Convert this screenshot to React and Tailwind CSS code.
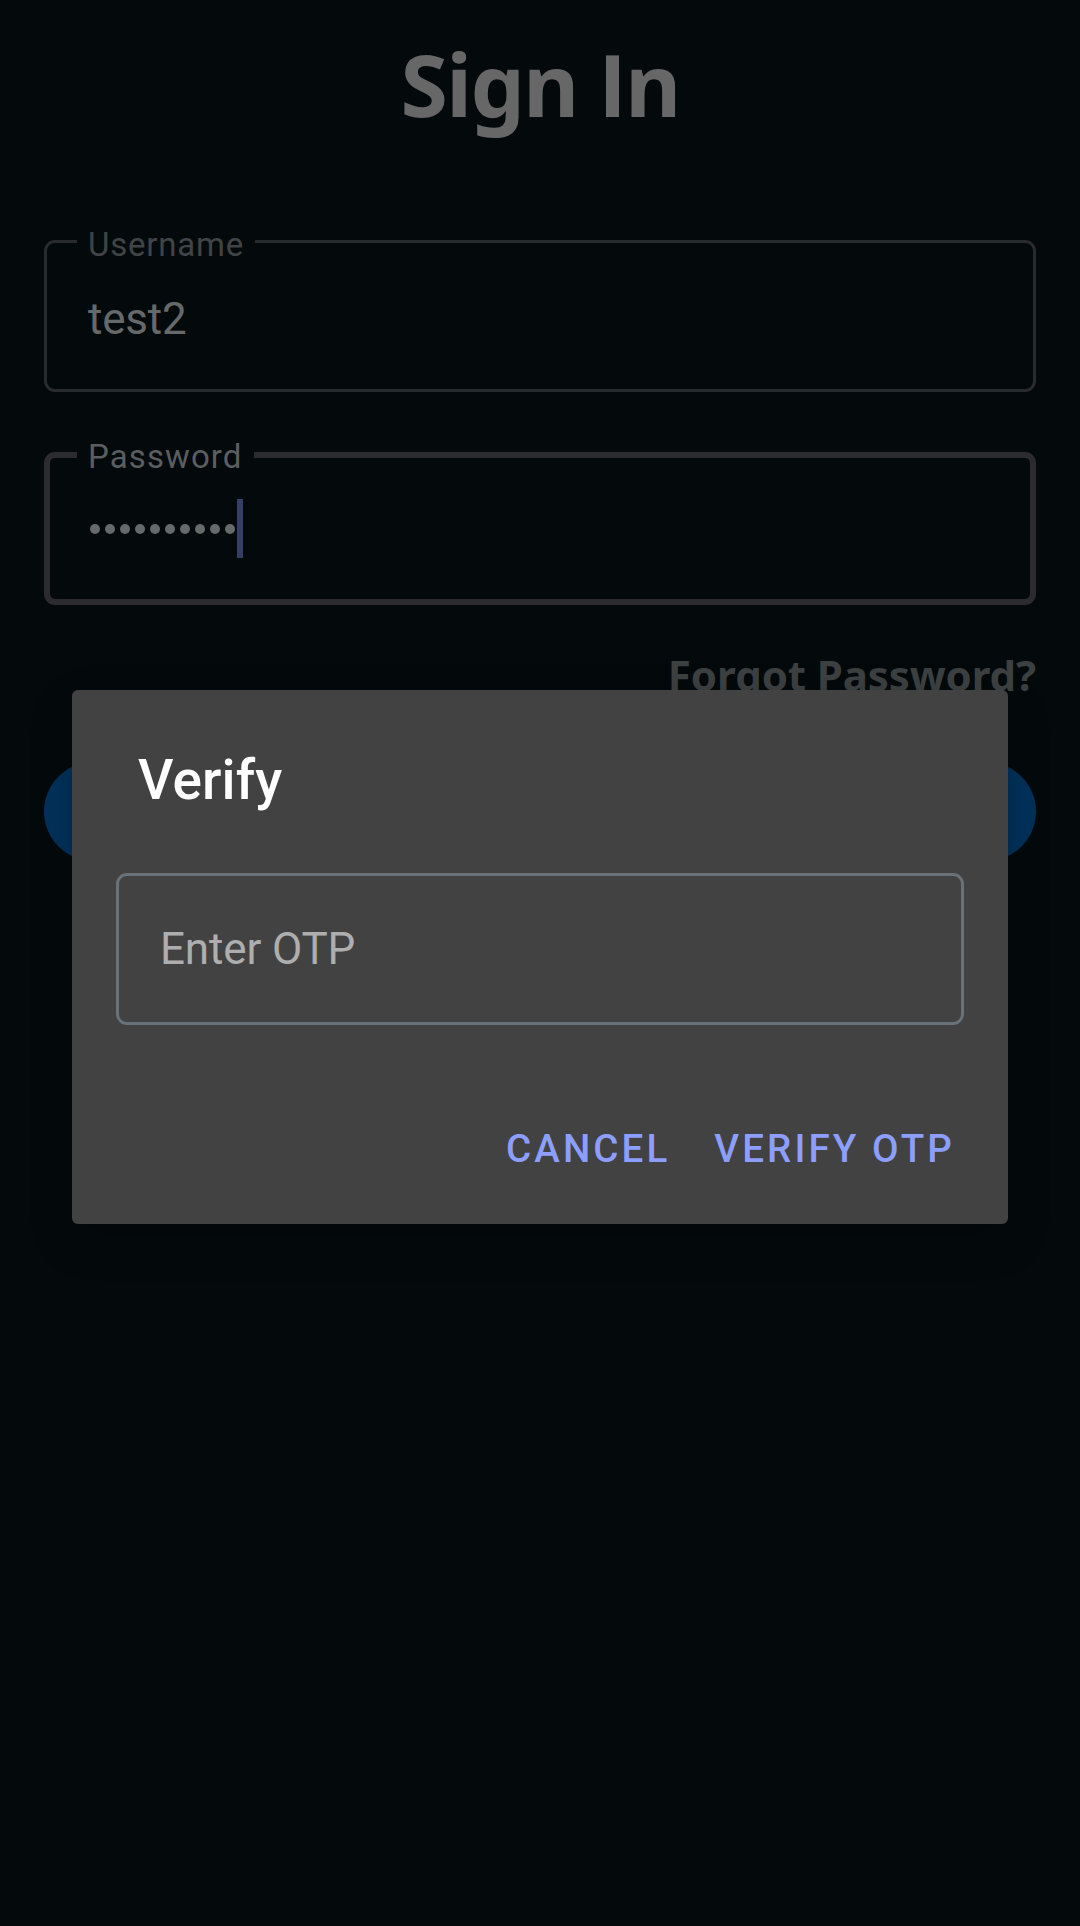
const PASSWORD_LENGTH = 10;

/**
 * OutlinedField - text field with a floating label cut into its border
 */
function OutlinedField({ label, legendClass, className, children }) {
  return (
    <fieldset className={`mx-11 min-w-0 rounded-[11px] ${className}`}>
      <legend className={`h-[44px] whitespace-nowrap text-[33px] ${legendClass}`}>
        {label}
      </legend>
      {children}
    </fieldset>
  );
}

function PasswordDots() {
  return (
    <div className="flex gap-[5px]" aria-label="Password">
      {Array.from({ length: PASSWORD_LENGTH }, (_, i) => (
        <span key={i} className="size-[10px] rounded-full bg-[#676a6b]" />
      ))}
    </div>
  );
}

/**
 * SignInScreen - dimmed form behind the dialog
 */
function SignInScreen() {
  return (
    <main className="flex flex-col">
      <h1 className="mt-[28px] h-[122px] text-center font-['Noto_Sans',sans-serif] text-[86px] font-bold leading-[112px] tracking-[-1.6px] text-[#676767]">
        Sign <span className="font-['Open_Sans',sans-serif]">I</span>n
      </h1>

      <OutlinedField
        label="Username"
        className="mt-[69px] h-[173px] border-[3px] border-[#292b2e]"
        legendClass="ml-[30px] w-[178px] pl-[11px] leading-[51px] tracking-[0.8px] text-[#414446]"
      >
        <p className="pl-[41px] pt-[30px] text-[44px] leading-[52px] tracking-[-0.2px] text-[#66696a]">
          test2
        </p>
      </OutlinedField>

      <OutlinedField
        label="Password"
        className="mt-[41px] h-[172px] border-[6px] border-[#2c2c30]"
        legendClass="ml-[27px] w-[177px] pl-[11px] leading-[47px] tracking-[1.1px] text-[#5b5e60]"
      >
        <div className="flex items-center gap-[2px] pl-[40px] pt-[22px]">
          <PasswordDots />
          <span className="h-[59px] w-[6px] bg-[#343e66]" />
        </div>
      </OutlinedField>

      <a className="mr-11 mt-[43px] self-end whitespace-nowrap font-['Noto_Sans',sans-serif] text-[42px] font-bold leading-[54px] tracking-[-0.1px] text-[#3d4041]">
        Forgot Password?
      </a>

      <button className="mx-11 mt-[60px] h-[99px] rounded-full bg-[#00315a]" aria-label="Sign in" />
    </main>
  );
}

/**
 * VerifyDialog - one-time password prompt
 */
function VerifyDialog() {
  return (
    <div className="absolute inset-0 flex flex-col px-[72px] pt-[690px]">
      <section
        role="dialog"
        className="flex h-[534px] flex-col rounded-[6px] bg-[#424242] px-11 shadow-[0_16px_44px_rgba(0,0,0,0.2)]"
      >
        <h2 className="ml-[22px] mt-[58px] text-[55px] font-medium leading-[64px] tracking-[0.1px] text-white">
          Verify
        </h2>
        <div className="mt-[61px] flex h-[152px] items-center rounded-[11px] border-[3px] border-[#697178] pl-[41px]">
          <span className="text-[44px] leading-[52px] tracking-[-0.15px] text-[#aeaeae]">
            Enter OTP
          </span>
        </div>
        <div className="mt-[100px] flex justify-end gap-[44px] pr-[9px] text-[38.5px] font-medium leading-[48px] tracking-[3.1px] text-[#8c9eff]">
          <button>CANCEL</button>
          <button>VERIFY OTP</button>
        </div>
      </section>
    </div>
  );
}

export default function App() {
  return (
    <div className="relative h-[1926px] w-[1080px] overflow-hidden bg-[#04090c] font-['Roboto',sans-serif]">
      <SignInScreen />
      <VerifyDialog />
    </div>
  );
}
